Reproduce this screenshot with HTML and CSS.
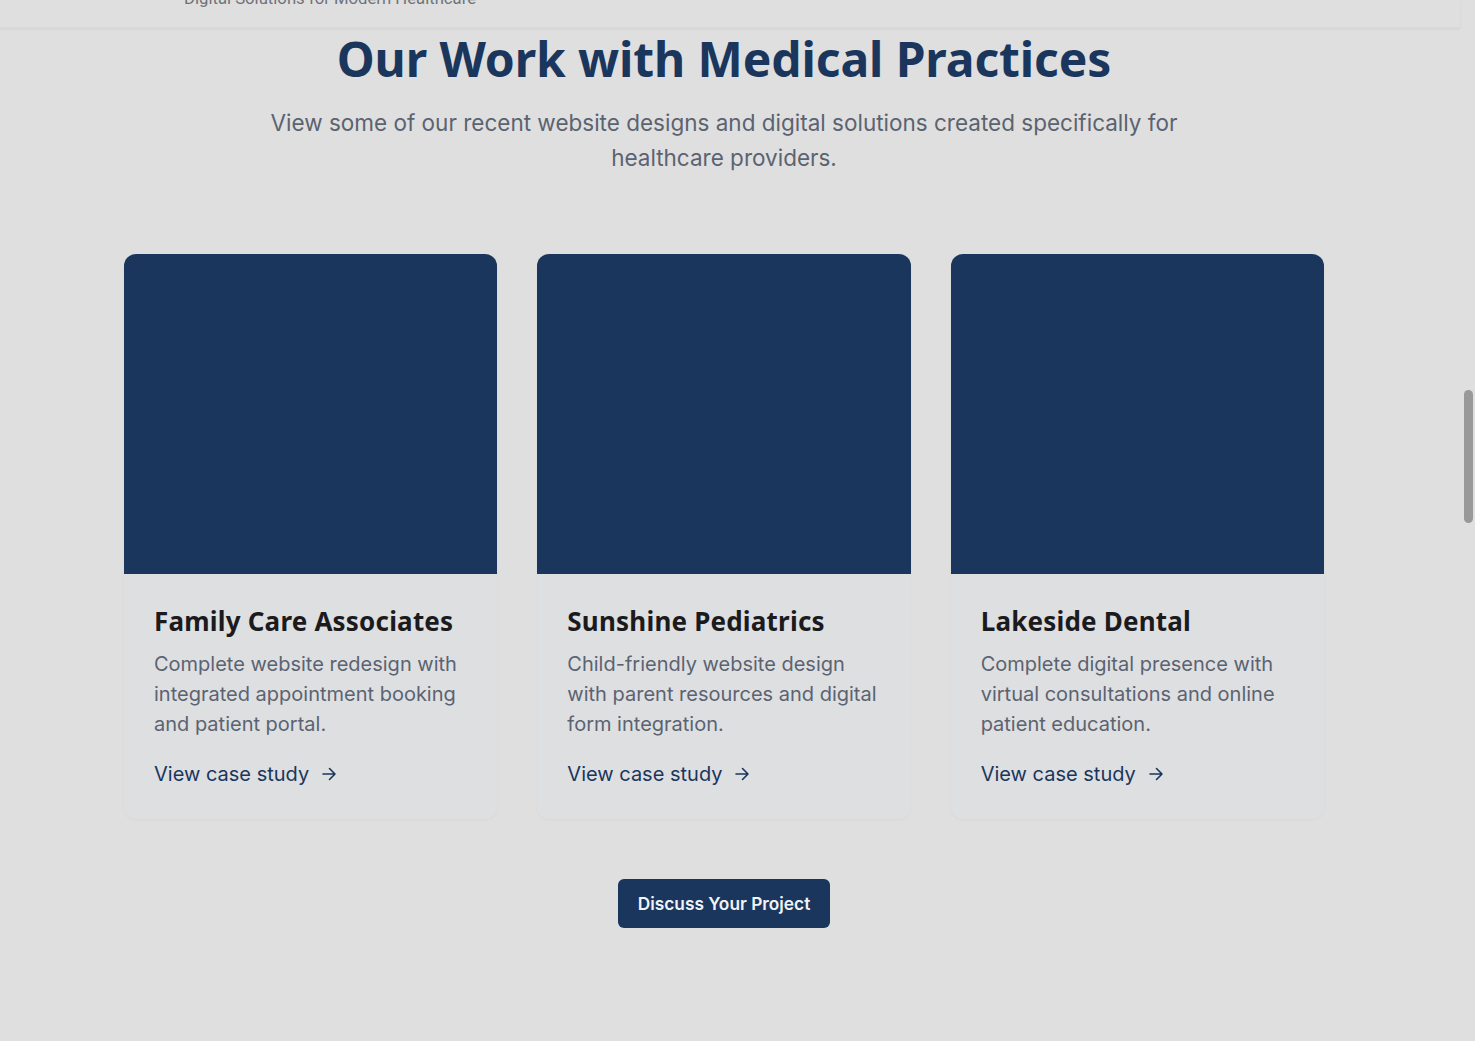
FILE: index.html
```html
<!DOCTYPE html>
<html lang="en">
<head>
<meta charset="utf-8">
<title>Our Work with Medical Practices</title>
<link rel="stylesheet" href="styles.css">
</head>
<body>
<div class="page">
  <header class="site-header">
    <div class="brand-tagline">Digital Solutions for Modern Healthcare</div>
  </header>
  <main class="work">
    <div class="container">
      <h1 class="work-title">Our Work with Medical Practices</h1>
      <p class="work-lead">View some of our recent website designs and digital solutions created specifically for healthcare providers.</p>
      <div class="cards">
        <article class="card">
          <div class="card-media"></div>
          <div class="card-body">
            <h3 class="card-title">Family Care Associates</h3>
            <p class="card-text">Complete website redesign with integrated appointment booking and patient portal.</p>
            <a class="card-link" href="#">View case study
              <svg class="arrow" width="16" height="16" viewBox="0 0 16 16" fill="none" stroke="currentColor" stroke-width="1.6" stroke-linecap="round" stroke-linejoin="round"><path d="M2 8h12M8.5 2.5 14 8l-5.5 5.5"/></svg>
            </a>
          </div>
        </article>
        <article class="card">
          <div class="card-media"></div>
          <div class="card-body">
            <h3 class="card-title">Sunshine Pediatrics</h3>
            <p class="card-text">Child-friendly website design with parent resources and digital form integration.</p>
            <a class="card-link" href="#">View case study
              <svg class="arrow" width="16" height="16" viewBox="0 0 16 16" fill="none" stroke="currentColor" stroke-width="1.6" stroke-linecap="round" stroke-linejoin="round"><path d="M2 8h12M8.5 2.5 14 8l-5.5 5.5"/></svg>
            </a>
          </div>
        </article>
        <article class="card">
          <div class="card-media"></div>
          <div class="card-body">
            <h3 class="card-title">Lakeside Dental</h3>
            <p class="card-text">Complete digital presence with virtual consultations and online patient education.</p>
            <a class="card-link" href="#">View case study
              <svg class="arrow" width="16" height="16" viewBox="0 0 16 16" fill="none" stroke="currentColor" stroke-width="1.6" stroke-linecap="round" stroke-linejoin="round"><path d="M2 8h12M8.5 2.5 14 8l-5.5 5.5"/></svg>
            </a>
          </div>
        </article>
      </div>
      <div class="cta">
        <a class="btn" href="#">Discuss Your Project</a>
      </div>
    </div>
  </main>
</div>
<div class="scrollbar"><div class="scroll-thumb"></div></div>
</body>
</html>
```

FILE: styles.css
```css
* { box-sizing: border-box; }
html, body { height: 100%; }
body {
  margin: 0;
  background: #dfdfdf;
  display: flex;
  overflow: hidden;
  font-family: Inter, "Noto Sans", sans-serif;
}
.page {
  width: 1460px;
  flex: none;
}
.site-header {
  height: 28px;
  overflow: hidden;
  background: #dfdfdf;
  box-shadow: 0 1px 3px rgba(0,0,0,0.06);
  border-bottom: 1px solid #dadada;
  position: relative;
  z-index: 2;
}
.brand-tagline {
  margin-top: -11px;
  padding-left: 184px;
  font-family: Roboto, "Noto Sans", sans-serif;
  font-size: 16.7px;
  line-height: 20px;
  color: #6f737a;
}
.work {
  padding: 0 136px 0 124px;
}
.container {
  width: 1200px;
}
.work-title {
  margin: 0;
  padding-top: 2px;
  text-align: center;
  font-family: "Noto Sans", sans-serif;
  font-weight: 700;
  font-size: 48px;
  line-height: 58px;
  letter-spacing: -0.1px;
  color: #1a365d;
}
.work-lead {
  margin: 17px auto 0;
  max-width: 930px;
  text-align: center;
  font-size: 22.5px;
  line-height: 35px;
  color: #5b6371;
}
.cards {
  margin-top: 79px;
  display: grid;
  grid-template-columns: repeat(3, 1fr);
  gap: 40px;
}
.card {
  background: #dedfe1;
  border-radius: 12px;
  overflow: hidden;
  box-shadow: 0 1px 3px rgba(0,0,0,0.03);
}
.card-media {
  height: 320px;
  background: #1a365d;
}
.card-body {
  padding: 30px 30px 30px;
}
.card-title {
  margin: 0;
  font-family: "Noto Sans", sans-serif;
  font-weight: 700;
  font-size: 26px;
  line-height: 34px;
  letter-spacing: 0.2px;
  color: #1b1b1d;
}
.card-text {
  margin: 11px 0 0;
  font-size: 20px;
  line-height: 30px;
  color: #5b6371;
}
.card-link {
  display: inline-flex;
  align-items: center;
  gap: 12px;
  margin-top: 20px;
  font-size: 20px;
  line-height: 30px;
  color: #1a365d;
  text-decoration: none;
}
.arrow { display: block; }
.cta {
  display: flex;
  justify-content: center;
  margin-top: 60px;
}
.btn {
  display: inline-block;
  padding: 0 20px;
  height: 49px;
  line-height: 49px;
  border-radius: 6px;
  background: #1a365d;
  color: #f1f3f6;
  font-weight: 600;
  font-size: 17.3px;
  text-decoration: none;
}
.scrollbar {
  width: 15px;
  flex: none;
  background: #dfdfdf;
  padding: 390px 2px 0 4px;
}
.scroll-thumb {
  width: 9px;
  height: 133px;
  border-radius: 5px;
  background: #999999;
}
```
